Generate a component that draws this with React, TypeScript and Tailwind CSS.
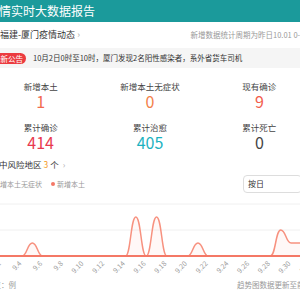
import React from 'react';

// daily values from 9.1 to 10.2
const values = [0, 0, 0, 0, 1, 0, 0, 0, 0, 0, 0, 0, 0, 0, 3, 0, 3, 0, 0, 0, 1, 0, 0, 0, 0, 0, 0, 0, 2, 1, 1, 1];
const labels = ['9.2', '9.4', '9.6', '9.8', '9.10', '9.12', '9.14', '9.16', '9.18', '9.20', '9.22', '9.24', '9.26', '9.28', '9.30', '10.2'];

const DAY = 10.35;
const X0 = 22 - 3 * DAY; // x of 9.1
const BASE = 63;
const UNIT = 13;

const px = (i: number) => X0 + i * DAY;
const py = (v: number) => BASE - v * UNIT;

function buildPath() {
    let d = `M${px(0)},${py(values[0])}`;
    for (let i = 1; i < values.length; i++) {
        const x0 = px(i - 1);
        const x1 = px(i);
        const h = (x1 - x0) / 2;
        d += ` C${x0 + h},${py(values[i - 1])} ${x1 - h},${py(values[i])} ${x1},${py(values[i])}`;
    }
    return d;
}

const Stat = ({ label, value, color }: { label: string; value: string; color: string }) => (
    <div className="flex flex-col items-center">
        <div className="text-[8.5px] leading-[12px] text-[#444]">{label}</div>
        <div className={`text-[16px] leading-[18px] ${color}`}>{value}</div>
    </div>
);

const TrendChart = () => {
    const line = buildPath();
    const area = `${line} L${px(values.length - 1)},${BASE} L${px(0)},${BASE} Z`;
    return (
        <svg width="300" height="86" className="ml-[14px] block overflow-visible">
            <line x1="0" y1="11" x2="300" y2="11" stroke="#f0f0f0" strokeWidth="1" />
            <line x1="0" y1="37" x2="300" y2="37" stroke="#f0f0f0" strokeWidth="1" />
            <path d={area} fill="#f7826f" fillOpacity="0.06" />
            <path d={line} fill="none" stroke="#f7917f" strokeWidth="1.5" />
            <line x1="0" y1={BASE} x2="300" y2={BASE} stroke="#f47866" strokeWidth="2.2" />
            {labels.map((l, k) => {
                const x = px(1 + k * 2);
                return (
                    <text
                        key={l}
                        x={x}
                        y={BASE + 8}
                        fontSize="7"
                        fill="#999"
                        textAnchor="end"
                        transform={`rotate(-45 ${x} ${BASE + 8})`}
                    >
                        {l}
                    </text>
                );
            })}
        </svg>
    );
};

export default function App() {
    return (
        <div className="w-[300px] h-[300px] overflow-hidden bg-white font-['Noto_Sans_CJK_SC',sans-serif]">
            <div className="-ml-[14px] w-[330px]">
                {/* header */}
                <div className="h-[22px] bg-[#1b9a9b] flex items-center pl-[1px]">
                    <span className="text-[12px] text-white whitespace-nowrap">疫情实时大数据报告</span>
                </div>

                {/* region title */}
                <div className="h-[26px] flex items-center justify-between pl-[14px]">
                    <span className="text-[9px] text-[#333] whitespace-nowrap">
                        福建-厦门疫情动态 <span className="text-[#aaa]">›</span>
                    </span>
                    <span className="text-[7.5px] text-[#999] whitespace-nowrap">新增数据统计周期为昨日10.01 0-24时</span>
                </div>

                {/* notice */}
                <div className="h-[20px] bg-[#f5f5f5] flex items-center pl-[4px] gap-[7px]">
                    <span className="bg-[#eb3b3f] text-white text-[7.5px] leading-[11px] px-[3px] rounded-full whitespace-nowrap">最新公告</span>
                    <span className="text-[7.5px] text-[#333] whitespace-nowrap">10月2日0时至10时，厦门发现2名阳性感染者，系外省货车司机</span>
                </div>

                {/* stats */}
                <div className="grid grid-cols-3 w-[328px] pt-[12px] gap-y-[11px]">
                    <Stat label="新增本土" value="1" color="text-[#f26b4f]" />
                    <Stat label="新增本土无症状" value="0" color="text-[#f3804a]" />
                    <Stat label="现有确诊" value="9" color="text-[#f25e4c]" />
                    <Stat label="累计确诊" value="414" color="text-[#e8394f]" />
                    <Stat label="累计治愈" value="405" color="text-[#1cb2bf]" />
                    <Stat label="累计死亡" value="0" color="text-[#444]" />
                </div>

                {/* risk areas */}
                <div className="mt-[5px] h-[16px] flex items-center pl-[13px] text-[8.5px] text-[#333] whitespace-nowrap">
                    中风险地区<span className="text-[#f39a1d] mx-[2px]">3</span>个<span className="text-[#aaa] ml-[4px]">›</span>
                </div>

                {/* legend + select */}
                <div className="mt-[3px] h-[18px] w-[330px] flex items-center text-[7px] text-[#999] whitespace-nowrap">
                    <span className="w-[4px] h-[4px] rounded-full bg-[#bbb] ml-[1px]" />
                    <span className="ml-[2px]">新增本土无症状</span>
                    <span className="w-[4px] h-[4px] rounded-full bg-[#f47866] ml-[9px]" />
                    <span className="ml-[2px]">新增本土</span>
                    <div className="ml-auto mr-[14px] h-[18px] w-[59px] border border-[#ddd] rounded-[4px] flex items-center pl-[4px] text-[8px] text-[#333]">
                        按日
                    </div>
                </div>

                <TrendChart />

                {/* footer */}
                <div className="flex items-center text-[7.5px] text-[#999] whitespace-nowrap">
                    <span>单位：例</span>
                    <span className="ml-[221px]">趋势图数据更新至前一日24时</span>
                </div>
            </div>
        </div>
    );
}
